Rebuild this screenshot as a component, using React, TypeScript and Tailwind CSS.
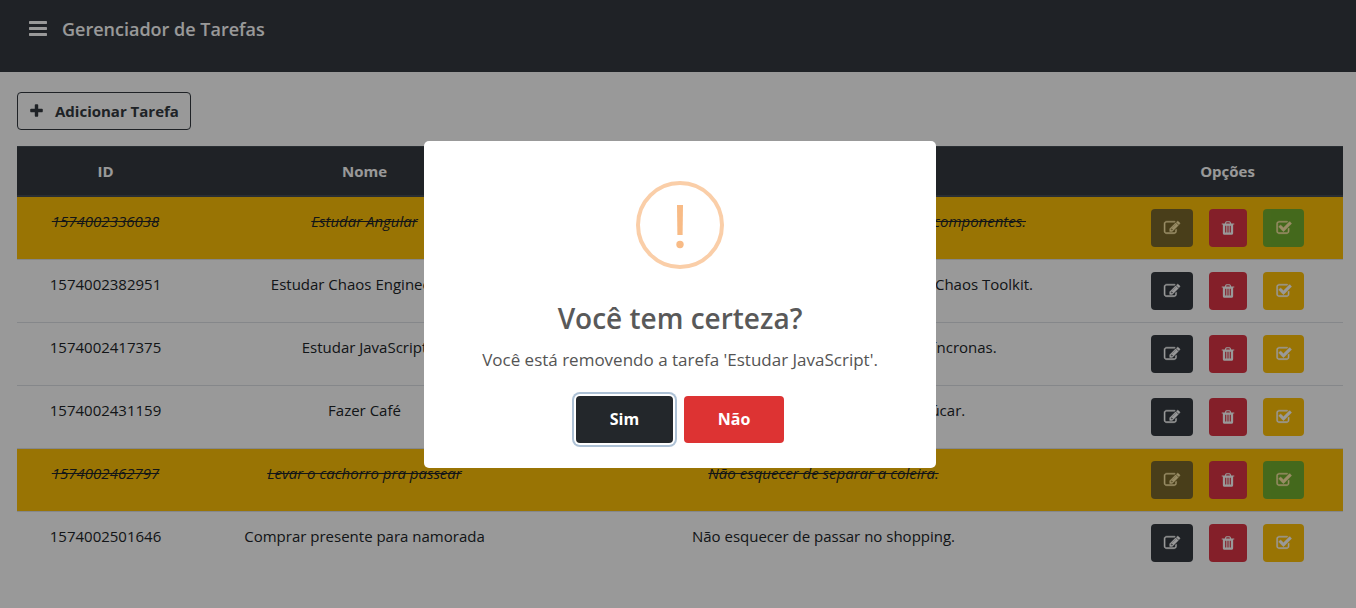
import React from "react";

type Task = { id: string; name: string; description: string; done: boolean };

const tasks: Task[] = [
  { id: "1574002336038", name: "Estudar Angular", description: "Estudar as rotas, serviços, diretivas, módulos e componentes.", done: true },
  { id: "1574002382951", name: "Estudar Chaos Engineering", description: "Estudar os experimentos e documentação do Chaos Toolkit.", done: false },
  { id: "1574002417375", name: "Estudar JavaScript", description: "Estudar promises, callbacks, funções assíncronas.", done: false },
  { id: "1574002431159", name: "Fazer Café", description: "Fazer um café forte e com pouco açúcar.", done: false },
  { id: "1574002462797", name: "Levar o cachorro pra passear", description: "Não esquecer de separar a coleira.", done: true },
  { id: "1574002501646", name: "Comprar presente para namorada", description: "Não esquecer de passar no shopping.", done: false },
];

const paths = {
  edit: "M888 1184l116-116-152-152-116 116v56h96v96h56zm440-720q-16-16-33 1l-350 350q-17 17-1 33t33-1l350-350q17-17 1-33zm80 594v190q0 119-84.5 203.5t-203.5 84.5h-832q-119 0-203.5-84.5t-84.5-203.5v-832q0-119 84.5-203.5t203.5-84.5h832q63 0 117 25 15 7 18 23 3 17-9 29l-49 49q-14 14-32 8-23-6-45-6h-832q-66 0-113 47t-47 113v832q0 66 47 113t113 47h832q66 0 113-47t47-113v-126q0-13 9-22l64-64q15-15 35-7t20 29zm-96-738l288 288-672 672h-288v-288zm444 132l-92 92-288-288 92-92q28-28 68-28t68 28l152 152q28 28 28 68t-28 68z",
  trash: "M704 1376v-704q0-14-9-23t-23-9h-64q-14 0-23 9t-9 23v704q0 14 9 23t23 9h64q14 0 23-9t9-23zm256 0v-704q0-14-9-23t-23-9h-64q-14 0-23 9t-9 23v704q0 14 9 23t23 9h64q14 0 23-9t9-23zm256 0v-704q0-14-9-23t-23-9h-64q-14 0-23 9t-9 23v704q0 14 9 23t23 9h64q14 0 23-9t9-23zm-544-992h448l-48-117q-7-9-17-11h-317q-10 2-17 11zm928 32v64q0 14-9 23t-23 9h-96v948q0 83-47 143.5t-113 60.5h-832q-66 0-113-58.5t-47-141.5v-952h-96q-14 0-23-9t-9-23v-64q0-14 9-23t23-9h309l70-167q15-37 54-63t79-26h320q40 0 79 26t54 63l70 167h309q14 0 23 9t9 23z",
  check: "M1472 930v318q0 119-84.5 203.5t-203.5 84.5h-832q-119 0-203.5-84.5t-84.5-203.5v-832q0-119 84.5-203.5t203.5-84.5h832q63 0 117 25 15 7 18 23 3 17-9 29l-49 49q-10 10-23 10-3 0-9-2-23-6-45-6h-832q-66 0-113 47t-47 113v832q0 66 47 113t113 47h832q66 0 113-47t47-113v-254q0-13 9-22l64-64q10-10 23-10 6 0 12 3 20 8 20 29zm231-489l-814 814q-24 24-57 24t-57-24l-430-430q-24-24-24-57t24-57l110-110q24-24 57-24t57 24l263 263 647-647q24-24 57-24t57 24l110 110q24 24 24 57t-24 57z",
  plus: "M1600 736v192q0 40-28 68t-68 28h-416v416q0 40-28 68t-68 28h-192q-40 0-68-28t-28-68v-416h-416q-40 0-68-28t-28-68v-192q0-40 28-68t68-28h416v-416q0-40 28-68t68-28h192q40 0 68 28t28 68v416h416q40 0 68 28t28 68z",
  bars: "M1664 1344v128q0 26-19 45t-45 19h-1408q-26 0-45-19t-19-45v-128q0-26 19-45t45-19h1408q26 0 45 19t19 45zm0-512v128q0 26-19 45t-45 19h-1408q-26 0-45-19t-19-45v-128q0-26 19-45t45-19h1408q26 0 45 19t19 45zm0-512v128q0 26-19 45t-45 19h-1408q-26 0-45-19t-19-45v-128q0-26 19-45t45-19h1408q26 0 45 19t19 45z",
};

type IconProps = { name: keyof typeof paths; className?: string; viewBox?: string; stroke?: number };

function Icon({ name, className = "size-4", viewBox = "0 0 1792 1792", stroke = 0 }: IconProps) {
  return (
    <svg viewBox={viewBox} className={className} fill="currentColor" stroke="currentColor" strokeWidth={stroke} overflow="visible" aria-hidden="true">
      <path d={paths[name]} />
    </svg>
  );
}

function TaskRow({ task, first }: { task: Task; first: boolean }) {
  const cell = `p-3 align-top leading-6 ${first ? "" : "border-t border-[#dee2e6]"}`;
  const text = `${cell} ${task.done ? "italic line-through" : ""}`;
  return (
    <tr className={task.done ? "bg-[#ffc107]" : ""}>
      <td className={text}>{task.id}</td>
      <td className={text}>{task.name}</td>
      <td className={text}>{task.description}</td>
      <td className={cell}>
        <div className="flex justify-center gap-4">
          <button aria-label="Editar" disabled={task.done} className="flex h-[38px] w-[42px] items-center justify-center rounded bg-[#343a40] text-white disabled:opacity-65">
            <Icon name="edit" stroke={50} />
          </button>
          <button aria-label="Remover" className="flex h-[38px] w-[38px] items-center justify-center rounded bg-[#dc3545] text-white">
            <Icon name="trash" />
          </button>
          <button
            aria-label="Concluir"
            disabled={task.done}
            className={`flex h-[38px] w-[41px] items-center justify-center rounded text-white disabled:opacity-65 ${task.done ? "bg-[#28a745]" : "bg-[#ffc107]"}`}
          >
            <Icon name="check" stroke={50} />
          </button>
        </div>
      </td>
    </tr>
  );
}

function ConfirmDialog() {
  return (
    <div className="fixed inset-0 flex items-center justify-center bg-black/40 pl-1">
      <div role="dialog" aria-modal="true" aria-labelledby="dialog-title" className="flex w-full max-w-[512px] flex-col items-center rounded-[5px] bg-white px-5 pt-10 pb-[25px] text-center">
        <svg viewBox="0 0 88 88" className="size-[88px]" aria-hidden="true">
          <circle cx="44" cy="44" r="42" fill="none" stroke="#facea8" strokeWidth="4" />
          <path d="M41 24h6l-.4 30h-5.2z" fill="#f8bb86" />
          <circle cx="44" cy="63.5" r="3.7" fill="#f8bb86" />
        </svg>
        <h2 id="dialog-title" className="mt-[31px] text-[28px] leading-9 font-semibold text-[#595959]">Você tem certeza?</h2>
        <p className="mt-3 text-[17px] leading-6 text-[#545454]">Você está removendo a tarefa 'Estudar JavaScript'.</p>
        <div className="mt-6 flex gap-[11px] text-base font-bold text-white">
          <button className="h-[47px] w-[97px] rounded bg-[#23272b] shadow-[0_0_0_2px_#fff,0_0_0_4px_rgba(50,100,150,0.4)]">Sim</button>
          <button className="h-[47px] w-[100px] rounded bg-[#dd3333]">Não</button>
        </div>
      </div>
    </div>
  );
}

export default function App() {
  return (
    <div className="min-h-screen bg-white font-['Open_Sans','Noto_Sans',sans-serif] text-[15px] text-[#212529]">
      <header className="flex h-[72px] items-start bg-[#343a40] pt-[14px] pl-[29px] text-white">
        <button aria-label="Menu" className="flex h-7 items-center">
          <Icon name="bars" viewBox="128 0 1536 1792" className="h-[21px] w-[18px]" />
        </button>
        <h1 className="ml-[15px] text-lg leading-[30px] font-semibold">Gerenciador de Tarefas</h1>
      </header>
      <main className="pt-5 pr-[13px] pl-[17px]">
        <button className="flex h-[38px] items-center gap-3 rounded border border-[#343a40] pr-[11px] pl-3 font-bold text-[#343a40]">
          <Icon name="plus" viewBox="192 0 1408 1792" className="h-4 w-[13px]" />
          Adicionar Tarefa
        </button>
        <table className="mt-4 w-full table-fixed border-separate border-spacing-0 text-center">
          <thead>
            <tr className="bg-[#343a40] text-white">
              <th className="w-[177px] border-t border-b-2 border-[#454d55] p-3 leading-6">ID</th>
              <th className="w-[341px] border-t border-b-2 border-[#454d55] p-3 leading-6">Nome</th>
              <th className="border-t border-b-2 border-[#454d55] p-3 leading-6">Descrição</th>
              <th className="w-[231px] border-t border-b-2 border-[#454d55] p-3 leading-6">Opções</th>
            </tr>
          </thead>
          <tbody>
            {tasks.map((task, i) => (
              <TaskRow key={task.id} task={task} first={i === 0} />
            ))}
          </tbody>
        </table>
      </main>
      <ConfirmDialog />
    </div>
  );
}
